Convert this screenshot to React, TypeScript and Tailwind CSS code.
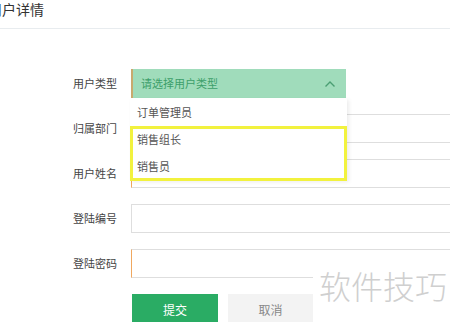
import React from 'react';

const FONT = { fontFamily: '"Noto Sans CJK SC", "Noto Sans", sans-serif' };

const ROWS = [
  { label: '归属部门', accent: false },
  { label: '用户姓名', accent: true },
  { label: '登陆编号', accent: false },
  { label: '登陆密码', accent: true },
];

const OPTIONS = ['订单管理员', '销售组长', '销售员'];

function Label({ text }: { text: string }) {
  return <div className="w-[117px] shrink-0 text-right text-[11px] text-[#444]">{text}</div>;
}

export default function App() {
  return (
    <div className="relative w-[450px] h-[322px] overflow-hidden bg-white" style={FONT}>
      <div className="h-[29px] border-b border-[#e8ecef]">
        <div className="ml-[-12px] pt-[1px] text-[14px] leading-[16px] text-[#333] whitespace-nowrap">用户详情</div>
      </div>

      <div className="mt-[40px] flex flex-col gap-[16px]">
        <div className="relative flex items-center">
          <Label text="用户类型" />
          <div className="ml-[14px] relative w-[215px]">
            <div className="flex h-[29px] items-center justify-between border-l-2 border-[#c9a96e] bg-[#a0dcbb] pl-[8px] pr-[10px] text-[11px] text-[#3d9f6a]">
              <span>请选择用户类型</span>
              <svg width="12" height="8" viewBox="0 0 12 8" fill="none">
                <path d="M1.5 6.5 L6 2 L10.5 6.5" stroke="#4a9e72" strokeWidth="1.4" />
              </svg>
            </div>
            <div className="absolute left-[-1px] top-[29px] z-10 w-[217px] bg-white pt-[1px] shadow-[2px_2px_4px_rgba(0,0,0,0.08)]">
              {OPTIONS.map((o) => (
                <div key={o} className="flex h-[27px] items-center pl-[7px] text-[11px] text-[#555]">
                  {o}
                </div>
              ))}
            </div>
            <div className="absolute left-[-1px] top-[57px] z-20 h-[55px] w-[217px] border-[3px] border-[#f2f23e]" />
          </div>
        </div>

        {ROWS.map((r) => (
          <div key={r.label} className="flex items-center">
            <Label text={r.label} />
            <div
              className={
                'ml-[14px] h-[29px] w-[340px] shrink-0 border border-[#dedede] ' +
                (r.accent ? 'border-l-[#f0a860]' : '')
              }
            />
          </div>
        ))}

        <div className="flex pl-[132px] gap-[10px]">
          <button className="h-[32px] w-[86px] bg-[#2aac64] text-[12px] text-white">提交</button>
          <button className="h-[32px] w-[85px] bg-[#f3f3f3] text-[12px] text-[#888]">取消</button>
        </div>
      </div>

      <div className="absolute left-[313px] top-[264px] z-30 whitespace-nowrap bg-white pl-[6px] pr-[10px] text-[32px] leading-[42px] font-light text-[#cfcfcf]">
        软件技巧
      </div>
    </div>
  );
}
